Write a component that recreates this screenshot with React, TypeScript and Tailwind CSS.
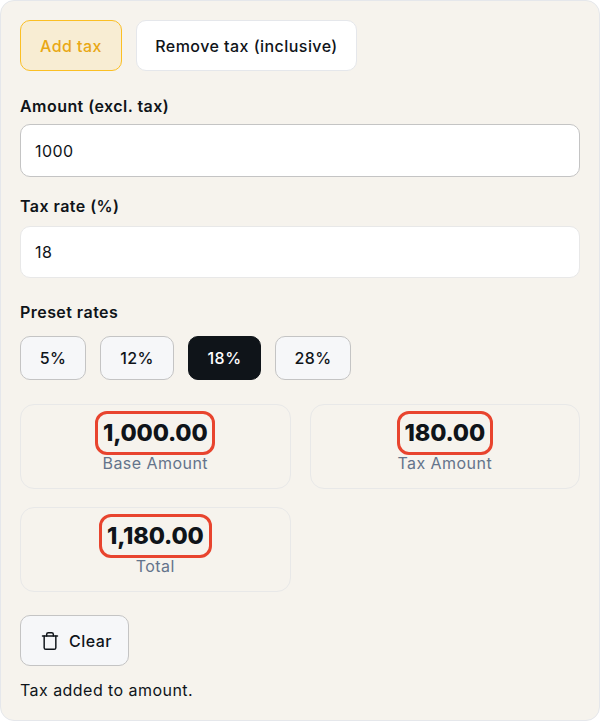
import { Trash } from 'lucide-react'

const presets = [
  { rate: '5%', width: 'w-[66px]' },
  { rate: '12%', width: 'w-[74px]' },
  { rate: '18%', width: 'w-[73px]' },
  { rate: '28%', width: 'w-[76px]' },
]

function Result({ value, label }: { value: string; label: string }) {
  return (
    <div className="flex h-[85px] flex-col items-center rounded-[14px] border border-[#e8e8e8] pt-[6px]">
      <div className="rounded-[12px] border-[3px] border-[#e8442e] px-[5px] text-[23.5px] leading-[38px] font-extrabold tracking-[-0.2px] text-[#0f1419]">
        {value}
      </div>
      <div className="text-base leading-[16px] text-[#64748b]">{label}</div>
    </div>
  )
}

export default function App() {
  return (
    <div className="h-[722px] bg-white font-['Inter',sans-serif] tracking-[0.45px] text-[#0f1419]">
      <div className="flex h-[721px] flex-col rounded-[14px] border border-[#e5e7eb] bg-[#f6f3ed] px-[19px] pt-[19px]">
        <div className="flex gap-[14px]">
          <button type="button" className="h-[51px] w-[102px] rounded-[10px] border border-[#fbbf24] bg-[#f8edd3] text-base font-medium text-[#e9a815]">
            Add tax
          </button>
          <button type="button" className="h-[51px] w-[221px] rounded-[10px] border border-[#e5e7eb] bg-white text-base font-medium">
            Remove tax (inclusive)
          </button>
        </div>

        <label className="mt-[25px] text-base leading-[20px] font-semibold">Amount (excl. tax)</label>
        <input readOnly value="1000" className="mt-[8px] h-[53px] rounded-[10px] border border-[#c4c4c4] bg-white px-[14px] text-base outline-none" />

        <label className="mt-[19px] text-base leading-[20px] font-semibold">Tax rate (%)</label>
        <input readOnly value="18" className="mt-[10px] h-[52px] rounded-[10px] border border-[#e8e8e8] bg-white px-[14px] text-base outline-none" />

        <label className="mt-[24px] text-base leading-[20px] font-semibold">Preset rates</label>
        <div className="mt-[14px] flex gap-[14px]">
          {presets.map(({ rate, width }) => (
            <button
              type="button"
              key={rate}
              className={`h-[44px] rounded-[10px] border text-base font-medium ${width} ${
                rate === '18%' ? 'border-[#0f1419] bg-[#0f1419] text-white' : 'border-[#c4c4c4] bg-[#f6f7f9]'
              }`}
            >
              {rate}
            </button>
          ))}
        </div>

        <div className="mt-[24px] grid grid-cols-2 gap-x-[19px] gap-y-[18px]">
          <Result value="1,000.00" label="Base Amount" />
          <Result value="180.00" label="Tax Amount" />
          <Result value="1,180.00" label="Total" />
        </div>

        <button type="button" className="mt-[23px] flex h-[51px] w-[109px] items-center gap-[9px] rounded-[10px] border border-[#c4c4c4] bg-[#f6f7f9] pl-[19px] text-base font-medium">
          <Trash size={20} strokeWidth={1.75} />
          Clear
        </button>
        <p className="mt-[14px] text-base leading-[20px]">Tax added to amount.</p>
      </div>
    </div>
  )
}
